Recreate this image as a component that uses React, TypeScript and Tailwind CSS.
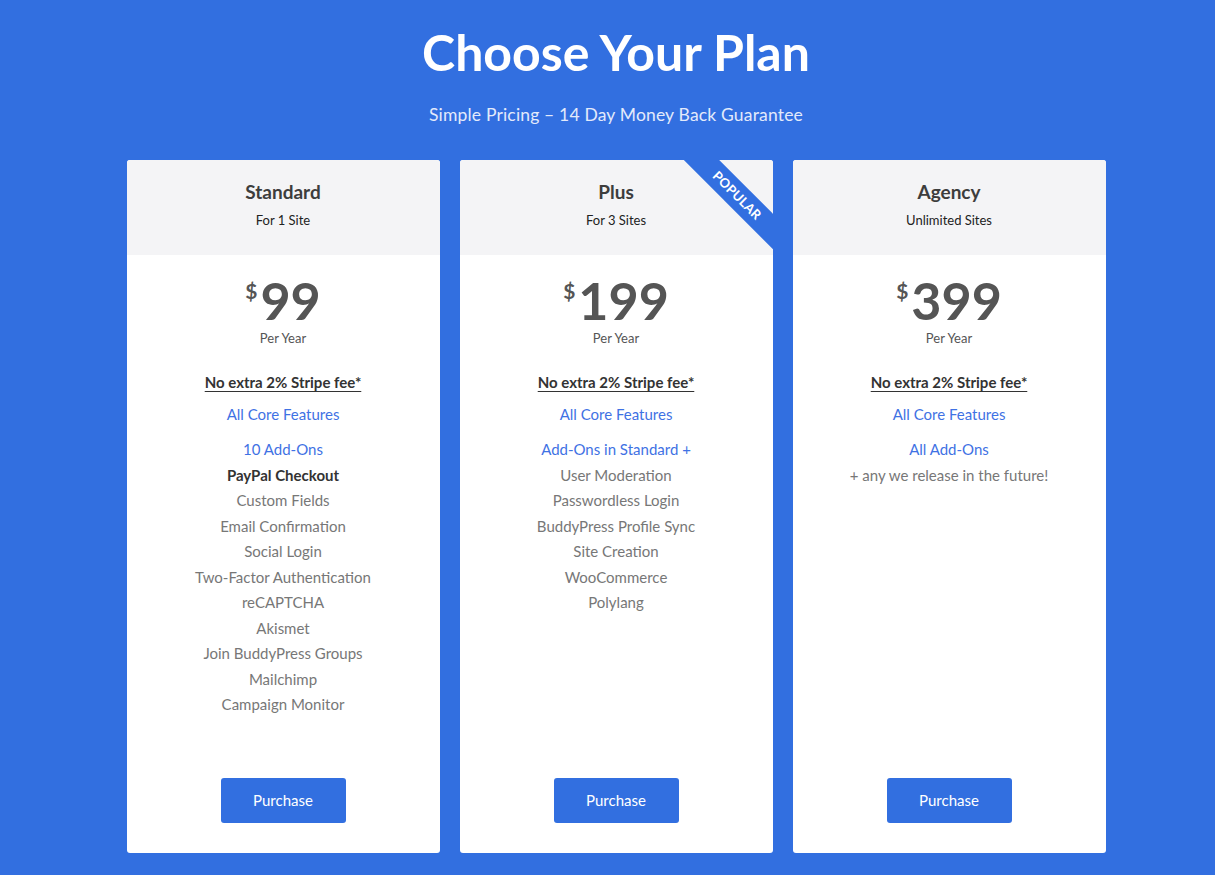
const plans = [
  {
    name: "Standard",
    sites: "For 1 Site",
    price: "99",
    addons: "10 Add-Ons",
    items: [
      { label: "PayPal Checkout", bold: true },
      { label: "Custom Fields" },
      { label: "Email Confirmation" },
      { label: "Social Login" },
      { label: "Two-Factor Authentication" },
      { label: "reCAPTCHA" },
      { label: "Akismet" },
      { label: "Join BuddyPress Groups" },
      { label: "Mailchimp" },
      { label: "Campaign Monitor" },
    ],
  },
  {
    name: "Plus",
    sites: "For 3 Sites",
    price: "199",
    addons: "Add-Ons in Standard +",
    popular: true,
    items: [
      { label: "User Moderation" },
      { label: "Passwordless Login" },
      { label: "BuddyPress Profile Sync" },
      { label: "Site Creation" },
      { label: "WooCommerce" },
      { label: "Polylang" },
    ],
  },
  {
    name: "Agency",
    sites: "Unlimited Sites",
    price: "399",
    addons: "All Add-Ons",
    items: [{ label: "+ any we release in the future!" }],
  },
];

export default function App() {
  return (
    <main
      className="min-h-screen bg-[#326fe0] pt-6 pb-[22px] pl-[17px]"
      style={{ fontFamily: "Lato, 'Open Sans', sans-serif" }}>
      <h1 className="text-center text-[50px] leading-[56px] font-bold text-white">
        Choose Your Plan
      </h1>
      <p className="mt-[23px] text-center text-[17.5px] leading-6 tracking-[0.01em] text-[#e3eafb]">
        Simple Pricing – 14 Day Money Back Guarantee
      </p>

      <div className="mt-[33px] flex justify-center gap-5">
        {plans.map((plan) => (
          <div
            key={plan.name}
            className="relative flex h-[693px] w-[313px] flex-col overflow-hidden rounded-[3px] bg-white">
            <div className="h-[95px] bg-[#f4f4f6] pt-5 text-center">
              <h2 className="text-[19px] leading-6 font-bold text-[#3d3d3d]">
                {plan.name}
              </h2>
              <p className="mt-[7px] text-[13px] leading-[18px] text-[#222]">
                {plan.sites}
              </p>
            </div>

            {plan.popular && (
              <div className="absolute top-[23px] left-[202px] flex h-[25px] w-[150px] rotate-45 items-center justify-center bg-[#326fe0] text-[13px] font-bold tracking-[0.02em] text-white">
                POPULAR
              </div>
            )}

            <div className="flex flex-1 flex-col items-center pt-[17px] text-center">
              <div className="flex items-start justify-center text-[#555]">
                <span className="mt-[7px] mr-[3px] text-[21px] leading-6 font-bold">
                  $
                </span>
                <span className="text-[52px] leading-[56px] font-bold">
                  {plan.price}
                </span>
              </div>
              <p className="mt-px text-[13px] leading-[18px] text-[#555]">
                Per Year
              </p>

              <p className="mt-[23px] text-[15px] leading-6 font-bold text-[#333] underline underline-offset-[3px]">
                No extra 2% Stripe fee*
              </p>
              <p className="mt-2 text-[15px] leading-6 text-[#3f72e4]">
                All Core Features
              </p>

              <ul className="mt-[11px] text-[15px] leading-[25.5px]">
                <li className="text-[#3f72e4]">{plan.addons}</li>
                {plan.items.map((item) => (
                  <li
                    key={item.label}
                    className={
                      item.bold ? "font-bold text-[#333]" : "text-[#777]"
                    }>
                    {item.label}
                  </li>
                ))}
              </ul>

              <button
                type="button"
                className="mt-auto mb-[30px] h-[45px] w-[125px] rounded-[3px] bg-[#326fe0] text-[15px] text-white">
                Purchase
              </button>
            </div>
          </div>
        ))}
      </div>
    </main>
  );
}
